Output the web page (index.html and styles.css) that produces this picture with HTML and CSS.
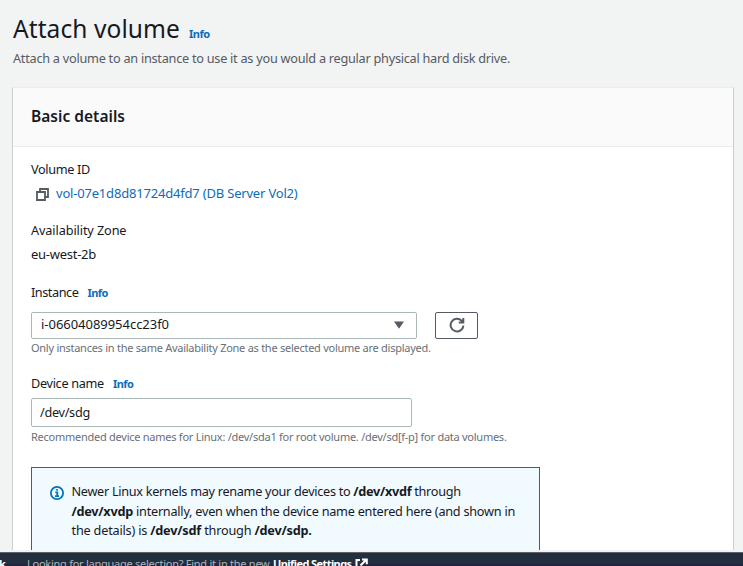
FILE: index.html
```html
<!DOCTYPE html>
<html lang="en">
<head>
<meta charset="utf-8">
<title>Attach volume</title>
<link rel="stylesheet" href="styles.css">
</head>
<body>
<div class="app">
  <header class="page-head">
    <div class="title-row"><h1 class="title">Attach volume</h1><a class="info">Info</a></div>
    <p class="subtitle">Attach a volume to an instance to use it as you would a regular physical hard disk drive.</p>
  </header>
  <main class="card">
    <div class="card-head"><h2>Basic details</h2></div>
    <div class="card-body">
      <div class="field volume">
        <div class="label">Volume ID</div>
        <div class="value link-row">
          <svg class="copy" width="13" height="13" viewBox="0 0 13 13"><path d="M4 3.5V1h8v8H9.5M1 4h8v8H1z"/></svg>
          <a class="link">vol-07e1d8d81724d4fd7 (DB Server Vol2)</a>
        </div>
      </div>
      <div class="field zone">
        <div class="label">Availability Zone</div>
        <div class="value">eu-west-2b</div>
      </div>
      <div class="field instance">
        <div class="label">Instance<a class="info">Info</a></div>
        <div class="select-row">
          <div class="select"><span>i-06604089954cc23f0</span>
            <svg width="10" height="8" viewBox="0 0 10 8"><path d="M0 .4h10L5 7.8z"/></svg></div>
          <button class="refresh" aria-label="Refresh"><svg width="16" height="16" viewBox="0 0 16 16"><path d="M14.4 8.6A6.4 6.4 0 1 1 12.6 3.6L14 5.2M14.3 1v4.6H9.8"/></svg></button>
        </div>
        <div class="hint">Only instances in the same Availability Zone as the selected volume are displayed.</div>
      </div>
      <div class="field device">
        <div class="label">Device name<a class="info">Info</a></div>
        <div class="input">/dev/sdg</div>
        <div class="hint">Recommended device names for Linux: /dev/sda1 for root volume. /dev/sd[f-p] for data volumes.</div>
      </div>
      <div class="alert">
        <svg class="alert-icon" width="14" height="14" viewBox="0 0 14 14"><circle cx="7" cy="7" r="6.1"/><path d="M5.3 6.3h2v3.6M5 10.2h4M6.2 3.9h1.7"/></svg>
        <p><span class="line-1">Newer Linux kernels may rename your devices to <b>/dev/xvdf</b> through</span><br>
        <span class="line-2"><b>/dev/xvdp</b> internally, even when the device name entered here (and shown in</span><br>
        <span class="line-3">the details) is <b>/dev/sdf</b> through <b>/dev/sdp.</b></span></p>
      </div>
    </div>
  </main>
  <footer class="foot"><span class="feedback">k</span><span class="language">Looking for language selection? Find it in the new</span><b>Unified Settings</b>
    <svg width="13" height="13" viewBox="0 0 13 13"><path d="M5 2H1.5v9.5H11V8M7 1.5h4.8v4.8M11.5 1.5L5.5 7.5"/></svg></footer>
</div>
</body>
</html>
```
FILE: styles.css
```css
* { box-sizing: border-box; }
body { margin: 0; background: #f2f3f3; color: #16191f; font: 12.7px/20px "Noto Sans", sans-serif; }
.app { height: 566px; overflow: hidden; display: flex; flex-direction: column; white-space: nowrap; }
h1, h2, p { margin: 0; }

.page-head { height: 87px; padding: 13px 13px 0; flex: none; }
.title-row { display: flex; align-items: baseline; height: 35px; }
.title { font-size: 24.5px; line-height: 32px; font-weight: 400; letter-spacing: .09px; }
.info { color: #0d6cb8; font-size: 11px; font-weight: 700; letter-spacing: -.516px; margin-left: 9px; }
.subtitle { color: #545b64; letter-spacing: -.25px; }

.card { flex: none; height: 463px; margin: 0 9px 0 12px; background: #fff; border: 1px solid #cacfcf; border-top-color: #eaeded; border-bottom: 0; overflow: hidden; }
.card-head { height: 59px; background: #fafafa; border-bottom: 1px solid #eaeded; padding: 18px 18px 0; }
h2 { font-size: 15.5px; line-height: 20px; font-weight: 600; letter-spacing: .025px; }
.card-body { padding: 12px 18px 0; }
.label { height: 20px; }
.value { margin-top: 4px; height: 20px; }
.volume .label { letter-spacing: -.347px; }
.zone .label { letter-spacing: -.107px; }
.instance .label { letter-spacing: -.45px; }
.device .label { letter-spacing: -.318px; }

.link-row { display: flex; align-items: center; padding-left: 5px; }
.copy { fill: none; stroke: #545b64; stroke-width: 1.8; margin: 2px 7px 0 0; }
.link { color: #0d6cb8; font-size: 13px; letter-spacing: -.192px; }
.zone { margin-top: 17px; }
.zone .value { font-size: 13px; letter-spacing: -.264px; }
.instance { margin-top: 18px; }
.select-row { display: flex; gap: 18px; margin-top: 10px; }
.select { width: 386px; height: 27px; border: 1px solid #aab7b8; border-radius: 2px; display: flex; align-items: center; justify-content: space-between; padding: 0 12px 1px 9px; font-size: 13px; letter-spacing: -.032px; }
.select span { position: relative; top: -1px; }
.select svg { fill: #545b64; }
.refresh { width: 43px; height: 27px; border: 1px solid #545b64; border-radius: 2px; background: #fff; padding: 0 0 1px; display: flex; align-items: center; justify-content: center; }
.refresh svg { fill: none; stroke: #545b64; stroke-width: 2; }
.hint { font-size: 11px; line-height: 16px; color: #687078; margin-top: 1px; letter-spacing: -.262px; }
.device { margin-top: 17px; }
.input { width: 381px; height: 29px; margin-top: 5px; border: 1px solid #aab7b8; border-radius: 2px; padding: 3px 8px; letter-spacing: -.297px; }
.device .hint { margin-top: 2px; letter-spacing: -.256px; }

.alert { width: 509px; height: 100px; margin-top: 22px; border: 1px solid #0073bb; background: #f1faff; display: flex; padding: 14px 18px; line-height: 19.5px; }
.alert-icon { flex: none; margin: 4px 7.5px 0 0; fill: none; stroke: #0073bb; stroke-width: 1.8; }
.line-1 { letter-spacing: -.3px; }
.line-2 { letter-spacing: -.25px; }
.line-3 { letter-spacing: -.2px; }
b { font-weight: 700; }

.foot { flex: none; height: 14px; margin-top: 2px; background: linear-gradient(#232f3e 11px, #232440 11px); border-top: 1px solid #5b626b; color: #aab7b8; font-size: 11px; line-height: 21px; display: flex; overflow: hidden; }
.foot b { color: #fff; margin-left: 3.5px; letter-spacing: -.58px; }
.feedback { width: 28px; margin-left: -1px; color: #fff; font-weight: 700; }
.language { letter-spacing: -.26px; }
.foot svg { fill: none; stroke: #fff; stroke-width: 2; margin: 5px 0 0 3px; }
```
